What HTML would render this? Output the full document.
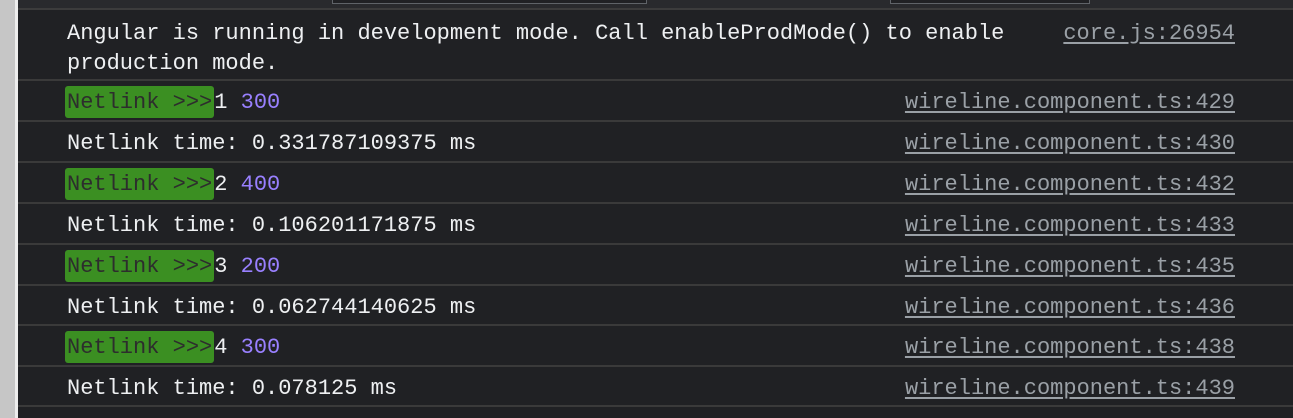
<!DOCTYPE html>
<html><head><style>
body{margin:0;width:1293px;height:418px;overflow:hidden;background:#202124;position:relative;font-family:"Liberation Mono",monospace;font-size:22px;color:#eef0f2}
.lg{position:absolute;left:0;top:0;width:15px;height:418px;background:#c6c6c6}
.lg2{position:absolute;left:15px;top:0;width:3px;height:418px;background:#ededed}
.top{position:absolute;left:18px;top:0;right:0;height:8px;background:#292a2d;border-bottom:2px solid #3c3c3c}
.box{position:absolute;top:0;height:3px;border:1px solid #5f6368;border-top:none;background:#202124}
.row{position:absolute;left:18px;right:0;border-bottom:2px solid #3a3a3a}
.t{position:absolute;left:49px;white-space:pre;line-height:30px}
.l{position:absolute;right:58px;color:#9aa0a6;text-decoration:underline;text-underline-offset:3px;white-space:pre;line-height:30px}
.g{background:#3b8f22;color:#2d2d2d;border-radius:3px;padding:4px 2px 3px 2px;margin-left:-2px}
.n{color:#9980ff}
</style></head><body>
<div class="lg"></div><div class="lg2"></div>
<div class="top"></div>
<div class="box" style="left:332px;width:313px"></div>
<div class="box" style="left:890px;width:198px"></div>

<div class="row" style="top:10px;height:69px"><div class="t" style="top:9px">Angular is running in development mode. Call enableProdMode() to enable
production mode.</div><div class="l" style="top:9px">core.js:26954</div></div>

<div class="row" style="top:81px;height:39px"><div class="t" style="top:7px"><span class="g">Netlink &gt;&gt;&gt;</span>1 <span class="n">300</span></div><div class="l" style="top:7px">wireline.component.ts:429</div></div>
<div class="row" style="top:122px;height:39px"><div class="t" style="top:7px">Netlink time: 0.331787109375 ms</div><div class="l" style="top:7px">wireline.component.ts:430</div></div>
<div class="row" style="top:163px;height:39px"><div class="t" style="top:7px"><span class="g">Netlink &gt;&gt;&gt;</span>2 <span class="n">400</span></div><div class="l" style="top:7px">wireline.component.ts:432</div></div>
<div class="row" style="top:204px;height:39px"><div class="t" style="top:7px">Netlink time: 0.106201171875 ms</div><div class="l" style="top:7px">wireline.component.ts:433</div></div>
<div class="row" style="top:245px;height:39px"><div class="t" style="top:7px"><span class="g">Netlink &gt;&gt;&gt;</span>3 <span class="n">200</span></div><div class="l" style="top:7px">wireline.component.ts:435</div></div>
<div class="row" style="top:286px;height:38px"><div class="t" style="top:7px">Netlink time: 0.062744140625 ms</div><div class="l" style="top:7px">wireline.component.ts:436</div></div>
<div class="row" style="top:326px;height:39px"><div class="t" style="top:7px"><span class="g">Netlink &gt;&gt;&gt;</span>4 <span class="n">300</span></div><div class="l" style="top:7px">wireline.component.ts:438</div></div>
<div class="row" style="top:367px;height:38px"><div class="t" style="top:7px">Netlink time: 0.078125 ms</div><div class="l" style="top:7px">wireline.component.ts:439</div></div>
</body></html>
